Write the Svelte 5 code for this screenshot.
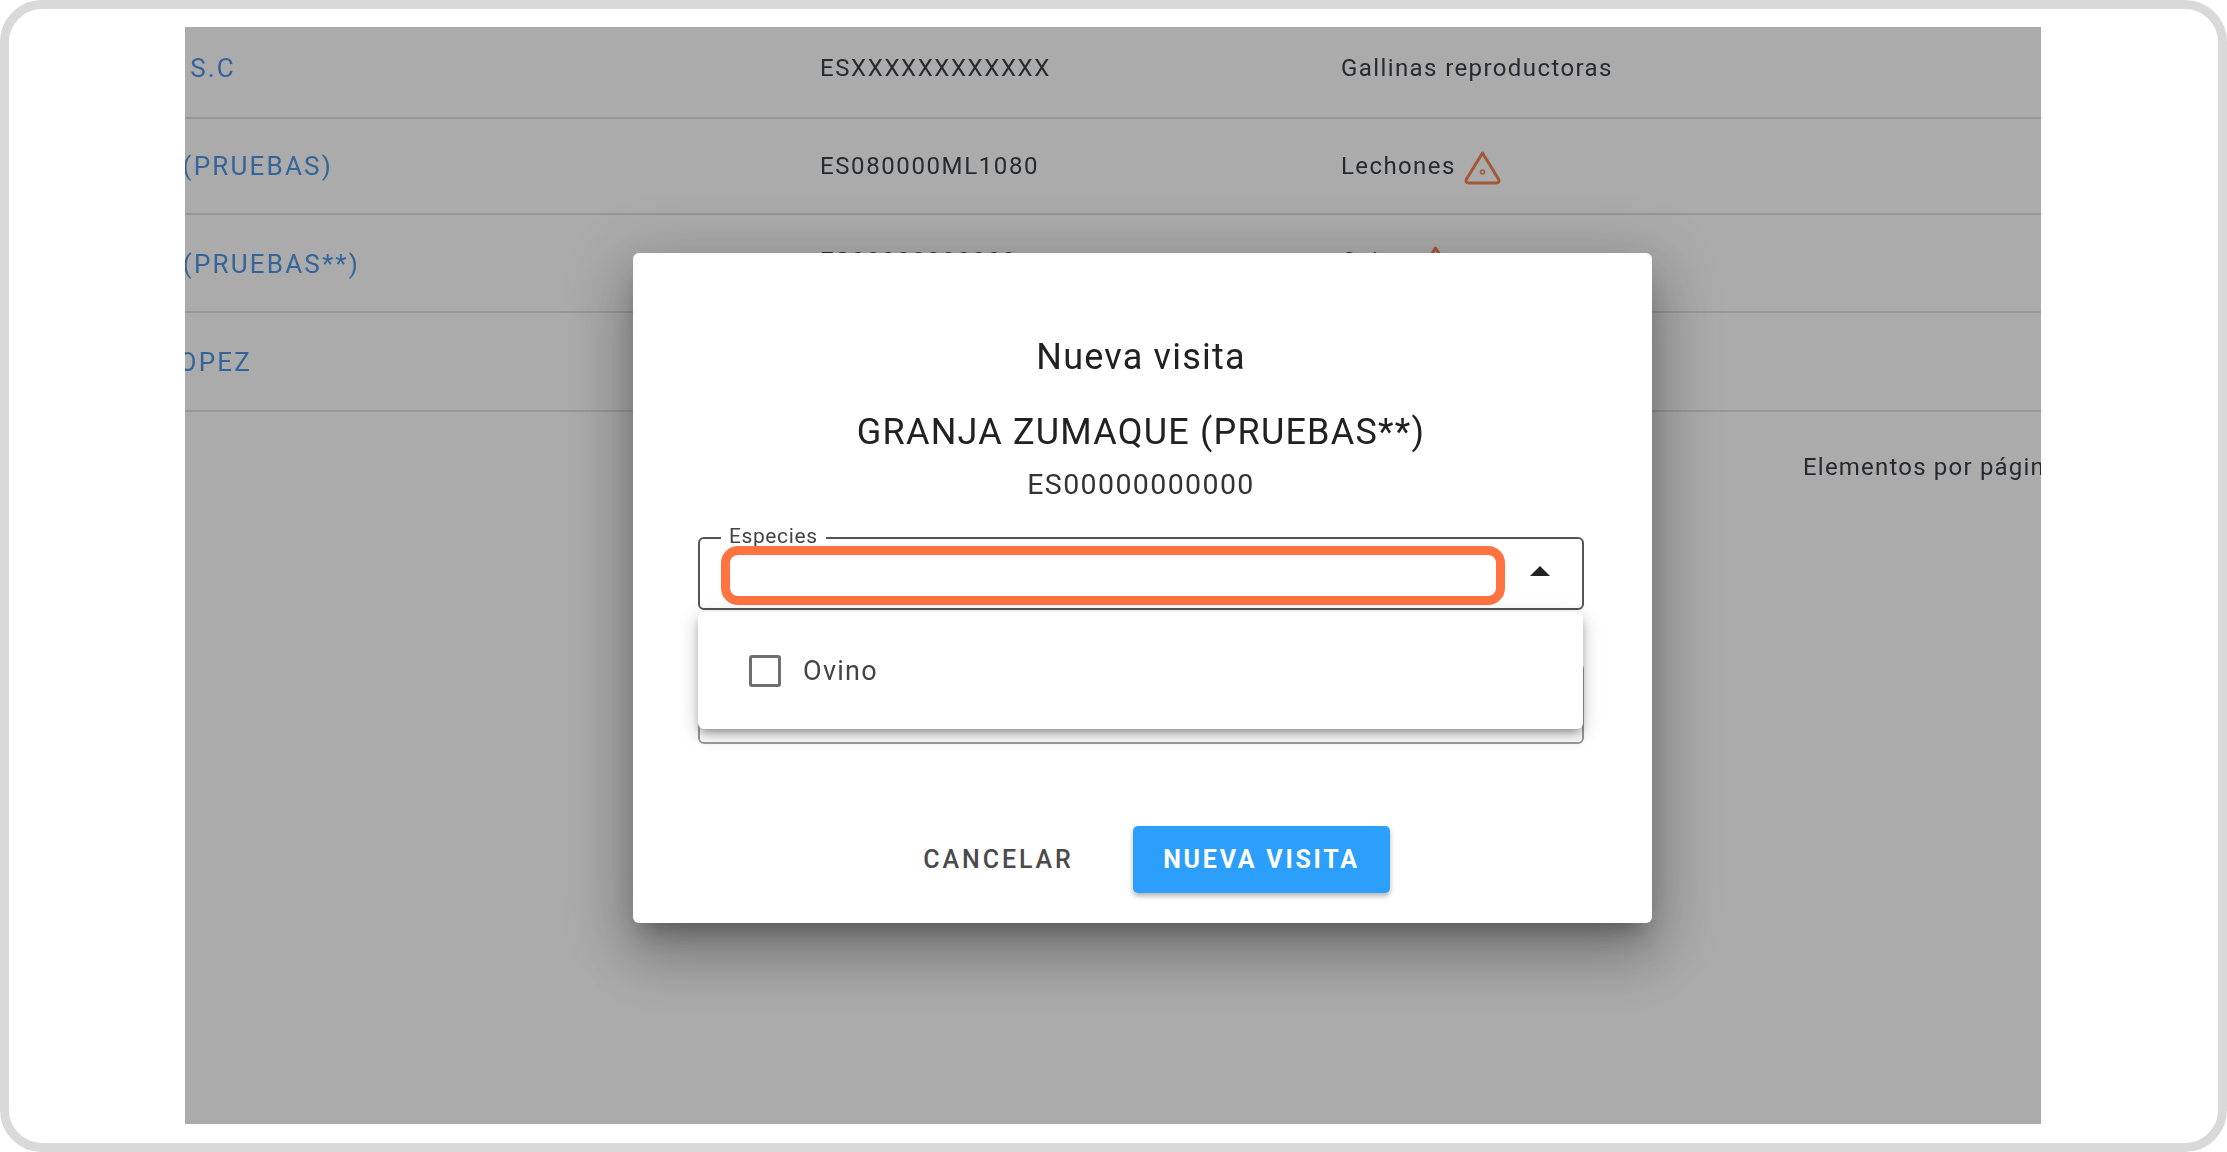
<script lang="ts">
  const rows = [
    { name: 'AVICOLA HERMANOS S.C', nameEnd: 51, code: 'ESXXXXXXXXXXXX', species: 'Gallinas reproductoras', warn: false },
    { name: 'GRANJA ENCINAR (PRUEBAS)', nameEnd: 148, code: 'ES080000ML1080', species: 'Lechones', warn: true },
    { name: 'GRANJA ZUMAQUE (PRUEBAS**)', nameEnd: 175, code: 'ES00000000000', species: 'Ovino', warn: true },
    { name: 'ANTONIO LOPEZ', nameEnd: 67, code: '', species: '', warn: false }
  ];
</script>

<div class="frame">
  <div class="screen">
    <div class="table">
      {#each rows as row}
        <div class="row">
          <div class="name-cell">
            <span class="name" style="width: {row.nameEnd}px">{row.name}</span>
          </div>
          <div class="code">{row.code}</div>
          <div class="species">
            {row.species}
            {#if row.warn}
              <svg class="warn" viewBox="0 0 37 34" fill="none" stroke="#f58250" stroke-width="3" stroke-linejoin="round">
                <path d="M18.500 2 L34.500 28 Q36 32 32 32 H5 Q1 32 2.500 28 Z" />
                <circle cx="18.500" cy="21" r="2" stroke-width="1.500" />
              </svg>
            {/if}
          </div>
        </div>
      {/each}
      <div class="paginator">Elementos por página</div>
    </div>

    <div class="overlay">
      <div class="dialog">
        <h2 class="title">Nueva visita</h2>
        <div class="farm">GRANJA ZUMAQUE (PRUEBAS**)</div>
        <div class="farm-code">ES00000000000</div>

        <div class="fields">
          <div class="field active">
            <span class="legend">Especies</span>
            <span class="highlight"></span>
            <svg class="arrow" viewBox="0 0 20 10"><path d="M10 0 L20 10 H0 Z" /></svg>
          </div>
          <div class="field second"></div>

          <div class="panel">
            <span class="checkbox"></span>
            <span class="option">Ovino</span>
          </div>
        </div>

        <div class="actions">
          <button class="cancel">CANCELAR</button>
          <button class="confirm">NUEVA VISITA</button>
        </div>
      </div>
    </div>
  </div>
</div>

<style>
  :global(body) {
    margin: 0;
    background: #fff;
  }

  .frame {
    box-sizing: border-box;
    width: 2227px;
    height: 1152px;
    border: 9px solid #d9d9d9;
    border-radius: 42px;
    padding: 18px 177px 19px 176px;
    background: #fff;
    font-family: Roboto, sans-serif;
  }

  .screen {
    position: relative;
    height: 100%;
    overflow: hidden;
    background: #fff;
  }

  .table {
    display: flex;
    flex-direction: column;
    font-size: 24px;
    letter-spacing: 1.4px;
    color: #3a3f46;
    filter: blur(0.5px);
  }

  .row {
    display: grid;
    grid-template-columns: 635px 521px 1fr;
    align-items: center;
    box-sizing: border-box;
    height: 98px;
    border-bottom: 2px solid #e2e2e2;
  }

  .row:nth-child(1) {
    height: 92px;
    padding-bottom: 8px;
  }

  .row:nth-child(2) {
    height: 96px;
  }

  .row:nth-child(3) {
    padding-top: 2px;
  }

  .row:nth-child(3) .code,
  .row:nth-child(3) .species {
    margin-bottom: 6px;
  }

  .row:nth-child(4) {
    height: 99px;
  }

  .name-cell {
    display: flex;
  }

  .name {
    display: flex;
    justify-content: flex-end;
    overflow: hidden;
    white-space: nowrap;
    font-size: 26px;
    letter-spacing: 2.2px;
    color: #4f96e6;
  }

  .code {
    letter-spacing: 1.6px;
  }

  .species {
    display: flex;
    align-items: center;
    gap: 8px;
  }

  .warn {
    width: 37px;
    height: 34px;
    margin-top: 4px;
  }

  .paginator {
    margin-top: 41px;
    padding-left: 1618px;
    white-space: nowrap;
    font-size: 24px;
    letter-spacing: 1.2px;
  }

  .overlay {
    position: absolute;
    inset: 0;
    background: rgba(0, 0, 0, 0.33);
  }

  .dialog {
    position: absolute;
    left: 448px;
    top: 226px;
    box-sizing: border-box;
    width: 1019px;
    height: 670px;
    padding: 82px 68px 30px 65px;
    display: flex;
    flex-direction: column;
    background: #fff;
    border-radius: 6px;
    color: #212121;
    box-shadow:
      0 16px 22px -10px rgba(0, 0, 0, 0.3),
      0 34px 54px 4px rgba(0, 0, 0, 0.18),
      0 13px 65px 11px rgba(0, 0, 0, 0.15);
  }

  .title {
    margin: 0;
    text-align: center;
    font-size: 36px;
    font-weight: 400;
    line-height: 44px;
    letter-spacing: 1.2px;
    filter: blur(0.4px);
  }

  .farm {
    margin-top: 31px;
    text-align: center;
    font-size: 36px;
    line-height: 44px;
    letter-spacing: 1.2px;
    filter: blur(0.4px);
  }

  .farm-code {
    margin-top: 13px;
    text-align: center;
    font-size: 28.5px;
    line-height: 36px;
    letter-spacing: 1.4px;
    color: #333;
    filter: blur(0.4px);
  }

  .fields {
    position: relative;
    margin-top: 34px;
    display: flex;
    flex-direction: column;
    gap: 53px;
  }

  .field {
    position: relative;
    box-sizing: border-box;
    height: 73px;
    border: 2px solid #9a9a9a;
    border-radius: 6px;
  }

  .field.active {
    border-color: #555;
  }

  .field.second {
    height: 81px;
  }

  .legend {
    position: absolute;
    left: 21px;
    top: -15px;
    padding: 0 8px;
    background: #fff;
    font-size: 21px;
    line-height: 24px;
    letter-spacing: 0.6px;
    color: #444;
    filter: blur(0.4px);
  }

  .highlight {
    position: absolute;
    left: 21px;
    top: 7px;
    box-sizing: border-box;
    width: 784px;
    height: 59px;
    border: 9px solid #ff7340;
    border-radius: 17px;
  }

  .arrow {
    position: absolute;
    right: 32px;
    top: 27px;
    width: 20px;
    height: 10px;
    fill: #222;
  }

  .panel {
    position: absolute;
    left: 0;
    right: 1px;
    top: 75px;
    box-sizing: border-box;
    height: 117px;
    padding-left: 51px;
    display: flex;
    align-items: center;
    gap: 22px;
    background: #fff;
    border-radius: 6px;
    box-shadow:
      0 5px 8px -3px rgba(0, 0, 0, 0.35),
      0 8px 14px 1px rgba(0, 0, 0, 0.12),
      0 3px 20px 2px rgba(0, 0, 0, 0.1);
  }

  .checkbox {
    box-sizing: border-box;
    width: 32px;
    height: 32px;
    border: 3px solid #6f6f6f;
    border-radius: 3px;
    filter: blur(0.4px);
  }

  .option {
    font-size: 27px;
    letter-spacing: 1.3px;
    color: #444;
    filter: blur(0.4px);
  }

  .actions {
    margin-top: auto;
    display: flex;
    justify-content: flex-end;
    align-items: center;
    padding-right: 194px;
  }

  button {
    border: 0;
    font-family: Roboto, sans-serif;
    font-size: 25px;
    background: none;
    padding: 0;
    cursor: pointer;
  }

  .cancel {
    width: 269px;
    height: 67px;
    letter-spacing: 2.9px;
    color: #4a4a4a;
    font-weight: 500;
  }

  .confirm {
    width: 257px;
    height: 67px;
    letter-spacing: 2.75px;
    background: #2b9ffb;
    color: #fff;
    font-weight: 700;
    border-radius: 5px;
    box-shadow: 0 3px 5px rgba(0, 0, 0, 0.3);
  }
</style>
